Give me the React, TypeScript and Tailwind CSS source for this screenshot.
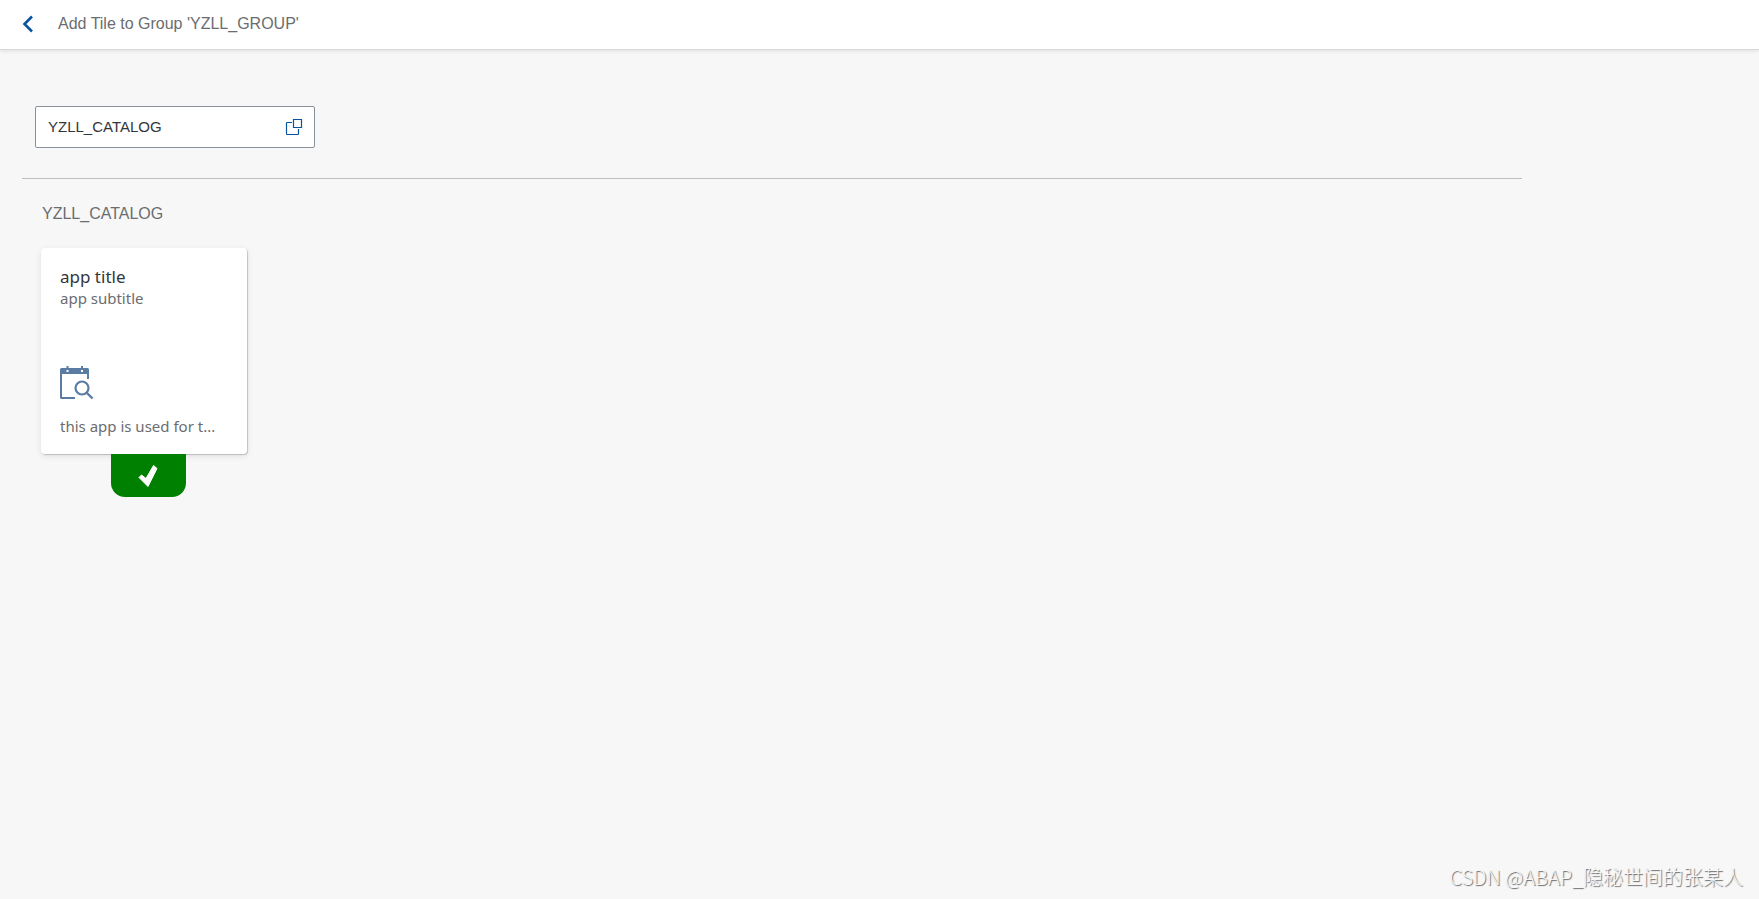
import { useState } from 'react'

const GROUP_NAME = 'YZLL_GROUP'

const TILES = [
  { id: 'app', title: 'app title', subtitle: 'app subtitle', info: 'this app is used for t...' },
]

function BackIcon() {
  return (
    <svg width="12" height="18" viewBox="0 0 12 18" fill="none" stroke="#0854a0" strokeWidth="2.6" aria-hidden="true">
      <path d="M10 1.5 2.5 9l7.5 7.5" />
    </svg>
  )
}

function ValueHelpIcon() {
  return (
    <svg width="18" height="18" viewBox="0 0 18 18" fill="none" stroke="#0854a0" strokeWidth="1.2" aria-hidden="true">
      <path d="M8.5 1.5h8v8h-8z" />
      <path d="M7 4.500H2.200a.7.7 0 0 0-.7.7v10.600c0 .4.3.7.7.7h10.600a.7.7 0 0 0 .7-.7V11" />
    </svg>
  )
}

function CalendarSearchIcon() {
  return (
    <svg width="34" height="34" viewBox="0 0 34 34" fill="none" aria-hidden="true">
      <path
        fill="#5a7ca3"
        fillRule="evenodd"
        d="M1.500 2H6.500V0h2v2h12.500V0h2v2h4.500A1.500 1.500 0 0 1 29 3.500V13h-2V8H2v23h13v2H1.500A1.500 1.500 0 0 1 0 31.500V3.500A1.500 1.500 0 0 1 1.500 2ZM6.500 4v2h2V4h-2Zm14.500 0v2h2V4h-2Z"
      />
      <circle cx="22" cy="22" r="6.500" stroke="#5a7ca3" strokeWidth="2.200" />
      <path d="m26.500 26.500 6 6" stroke="#5a7ca3" strokeWidth="2.400" />
    </svg>
  )
}

function CheckIcon() {
  return (
    <svg width="20" height="24" viewBox="0 0 20 24" aria-hidden="true">
      <path
        fill="#fff"
        stroke="#fff"
        strokeLinejoin="round"
        d="M1 13.500 3.500 11 8 14.500 15.500 1.500 19 4.500 10 22.500Z"
      />
    </svg>
  )
}

export default function App() {
  const [catalog, setCatalog] = useState('YZLL_CATALOG')
  const [added, setAdded] = useState(true)

  return (
    <div className="flex min-h-screen flex-col bg-[#f7f7f7] font-['Liberation_Sans',sans-serif] text-[#6a6d70]">
      <header className="flex h-[49px] items-center gap-6 bg-white pb-px pl-[22px] shadow-[0_1px_0_#d9d9d9,0_2px_4px_rgba(0,0,0,0.1)]">
        <button type="button" aria-label="Back">
          <BackIcon />
        </button>
        <h1 className="text-base">Add Tile to Group '{GROUP_NAME}'</h1>
      </header>

      <main className="flex-1 pt-[57px] pr-[237px] pl-[22px]">
        {/* catalog filter */}
        <div className="border-b border-[#bfbfbf] pb-[30px] pl-[13px]">
          <div className="flex h-[42px] w-[280px] items-center rounded-xs border border-[#89919a] bg-white pr-[11px] pl-3">
            <input
              type="text"
              aria-label="Catalog"
              value={catalog}
              onChange={e => setCatalog(e.target.value)}
              className="min-w-0 flex-1 text-[15px] text-[#32363a] outline-none"
            />
            <button type="button" aria-label="Select catalog">
              <ValueHelpIcon />
            </button>
          </div>
        </div>

        <section className="pt-[23px] pl-[19px]">
          <h2 className="pl-px text-base">YZLL_CATALOG</h2>
          <ul className="mt-[22px] flex flex-wrap gap-4">
            {TILES.map(tile => (
              <li key={tile.id} className="flex flex-col items-center">
                <article className="flex size-[206px] flex-col rounded-sm bg-white px-[19px] pt-[18px] pb-[18px] font-['Noto_Sans',sans-serif] shadow-[1px_1px_1px_rgba(0,0,0,0.18),0_2px_6px_rgba(0,0,0,0.1)]">
                  <h3 className="text-[17px] leading-[22px] text-[#32363a]">{tile.title}</h3>
                  <p className="text-[15px] leading-5">{tile.subtitle}</p>
                  <div className="mt-auto">
                    <CalendarSearchIcon />
                  </div>
                  <p className="mt-4 text-[15px] leading-5 whitespace-nowrap">{tile.info}</p>
                </article>
                <button
                  type="button"
                  aria-label="Added to group"
                  aria-pressed={added}
                  onClick={() => setAdded(a => !a)}
                  className="ml-2 flex h-[43px] w-[75px] items-center justify-center rounded-b-[14px] bg-[#008000]"
                >
                  {added && <CheckIcon />}
                </button>
              </li>
            ))}
          </ul>
        </section>
      </main>

      <footer className="flex justify-end pr-4 pb-[10px] font-['Noto_Sans_CJK_SC',sans-serif] text-[20px] leading-6 font-light text-[#f7f7f7] [text-shadow:1px_1px_1px_#666]">
        CSDN @ABAP_隐秘世间的张某人
      </footer>
    </div>
  )
}
